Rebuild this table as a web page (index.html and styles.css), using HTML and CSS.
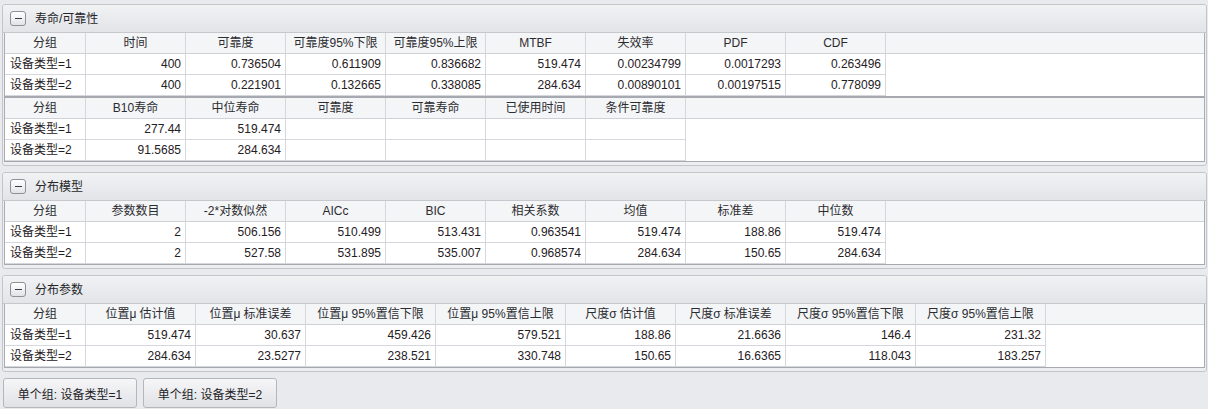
FILE: index.html
```html
<!DOCTYPE html>
<html lang="zh-CN">
<head>
<meta charset="utf-8">
<title>寿命/可靠性</title>
<link rel="stylesheet" href="styles.css">
</head>
<body>
<div class="page">

  <section class="panel">
    <div class="panel-head">
      <span class="toggle"><span class="minus"></span></span>
      <span class="panel-title">寿命/可靠性</span>
    </div>
    <div class="grid cols-a sep">
      <div class="row head">
        <div class="c">分组</div><div class="c">时间</div><div class="c">可靠度</div><div class="c">可靠度95%下限</div><div class="c">可靠度95%上限</div><div class="c">MTBF</div><div class="c">失效率</div><div class="c">PDF</div><div class="c">CDF</div><div class="c fill"></div>
      </div>
      <div class="row">
        <div class="c g">设备类型=1</div><div class="c n">400</div><div class="c n">0.736504</div><div class="c n">0.611909</div><div class="c n">0.836682</div><div class="c n">519.474</div><div class="c n">0.00234799</div><div class="c n">0.0017293</div><div class="c n">0.263496</div><div class="c fill"></div>
      </div>
      <div class="row">
        <div class="c g">设备类型=2</div><div class="c n">400</div><div class="c n">0.221901</div><div class="c n">0.132665</div><div class="c n">0.338085</div><div class="c n">284.634</div><div class="c n">0.00890101</div><div class="c n">0.00197515</div><div class="c n">0.778099</div><div class="c fill"></div>
      </div>
    </div>
    <div class="grid cols-b last">
      <div class="row head">
        <div class="c">分组</div><div class="c">B10寿命</div><div class="c">中位寿命</div><div class="c">可靠度</div><div class="c">可靠寿命</div><div class="c">已使用时间</div><div class="c">条件可靠度</div><div class="c fill"></div>
      </div>
      <div class="row">
        <div class="c g">设备类型=1</div><div class="c n">277.44</div><div class="c n">519.474</div><div class="c n"></div><div class="c n"></div><div class="c n"></div><div class="c n"></div><div class="c fill"></div>
      </div>
      <div class="row">
        <div class="c g">设备类型=2</div><div class="c n">91.5685</div><div class="c n">284.634</div><div class="c n"></div><div class="c n"></div><div class="c n"></div><div class="c n"></div><div class="c fill"></div>
      </div>
    </div>
  </section>

  <section class="panel">
    <div class="panel-head">
      <span class="toggle"><span class="minus"></span></span>
      <span class="panel-title">分布模型</span>
    </div>
    <div class="grid cols-a last">
      <div class="row head">
        <div class="c">分组</div><div class="c">参数数目</div><div class="c">-2*对数似然</div><div class="c">AICc</div><div class="c">BIC</div><div class="c">相关系数</div><div class="c">均值</div><div class="c">标准差</div><div class="c">中位数</div><div class="c fill"></div>
      </div>
      <div class="row">
        <div class="c g">设备类型=1</div><div class="c n">2</div><div class="c n">506.156</div><div class="c n">510.499</div><div class="c n">513.431</div><div class="c n">0.963541</div><div class="c n">519.474</div><div class="c n">188.86</div><div class="c n">519.474</div><div class="c fill"></div>
      </div>
      <div class="row">
        <div class="c g">设备类型=2</div><div class="c n">2</div><div class="c n">527.58</div><div class="c n">531.895</div><div class="c n">535.007</div><div class="c n">0.968574</div><div class="c n">284.634</div><div class="c n">150.65</div><div class="c n">284.634</div><div class="c fill"></div>
      </div>
    </div>
  </section>

  <section class="panel">
    <div class="panel-head">
      <span class="toggle"><span class="minus"></span></span>
      <span class="panel-title">分布参数</span>
    </div>
    <div class="grid cols-c last">
      <div class="row head">
        <div class="c">分组</div><div class="c">位置μ 估计值</div><div class="c">位置μ 标准误差</div><div class="c">位置μ 95%置信下限</div><div class="c">位置μ 95%置信上限</div><div class="c">尺度σ 估计值</div><div class="c">尺度σ 标准误差</div><div class="c">尺度σ 95%置信下限</div><div class="c">尺度σ 95%置信上限</div><div class="c fill"></div>
      </div>
      <div class="row">
        <div class="c g">设备类型=1</div><div class="c n">519.474</div><div class="c n">30.637</div><div class="c n">459.426</div><div class="c n">579.521</div><div class="c n">188.86</div><div class="c n">21.6636</div><div class="c n">146.4</div><div class="c n">231.32</div><div class="c fill"></div>
      </div>
      <div class="row">
        <div class="c g">设备类型=2</div><div class="c n">284.634</div><div class="c n">23.5277</div><div class="c n">238.521</div><div class="c n">330.748</div><div class="c n">150.65</div><div class="c n">16.6365</div><div class="c n">118.043</div><div class="c n">183.257</div><div class="c fill"></div>
      </div>
    </div>
  </section>

  <div class="buttons">
    <button class="btn">单个组: 设备类型=1</button>
    <button class="btn">单个组: 设备类型=2</button>
  </div>
</div>
</body>
</html>
```

FILE: styles.css
```css
* { box-sizing: border-box; }

html, body {
  margin: 0;
  padding: 0;
  background: #e9eaee;
}

body {
  font-family: "Liberation Sans", "Noto Sans CJK SC", sans-serif;
  font-size: 12px;
  color: #1f2024;
  width: 1208px;
  height: 409px;
  overflow: hidden;
}

.page {
  padding: 4px 1px 0 2px;
  display: flex;
  flex-direction: column;
  gap: 6px;
}

.panel {
  border: 1px solid #c3c5cb;
  border-radius: 3px;
  background: #eceef1;
  padding: 0 1px 3px 1px;
  width: 1205px;
}

.panel-head {
  height: 28px;
  margin: 0 -1px;
  padding-left: 7px;
  display: flex;
  align-items: center;
  gap: 9px;
  background: linear-gradient(#f1f2f4, #e3e4e8);
  border-bottom: 1px solid #c6c8ce;
  border-radius: 2px 2px 0 0;
}

.toggle {
  width: 16px;
  height: 15px;
  border: 1px solid #8d9097;
  border-radius: 3px;
  background: linear-gradient(#ffffff, #e2e3e7);
  display: flex;
  align-items: center;
  justify-content: center;
}

.minus {
  width: 7px;
  height: 1px;
  background: #3a3c42;
}

.panel-title {
  color: #25262a;
  line-height: 16px;
}

.grid {
  border-left: 1px solid #a9acb3;
  border-right: 1px solid #a9acb3;
  background: #ffffff;
}

.grid.sep { border-bottom: 2px solid #a6a9b0; }
.grid.last { border-bottom: 1px solid #a6a9b0; }

.row {
  display: grid;
  height: 21px;
}

.cols-a .row { grid-template-columns: 81px repeat(8, 100px) 1fr; }
.cols-b .row { grid-template-columns: 81px repeat(6, 100px) 1fr; }
.cols-c .row { grid-template-columns: 81px 110px 110px 130px 130px 110px 110px 130px 130px 1fr; }

.c {
  border-right: 1px solid #d5d7dc;
  border-bottom: 1px solid #d5d7dc;
  line-height: 20px;
  white-space: nowrap;
  overflow: hidden;
}

.head .c {
  background: #f4f5f7;
  text-align: center;
  color: #2b2c30;
  border-bottom-color: #cfd1d6;
}

.c.g {
  text-align: left;
  padding-left: 5px;
}

.c.n {
  text-align: right;
  padding-right: 4px;
}

.c.fill {
  border-right: none;
  border-bottom: none;
}

.head .c.fill {
  border-bottom: 1px solid #cfd1d6;
}

.buttons {
  display: flex;
  gap: 6px;
  padding-left: 1px;
}

.btn {
  width: 134px;
  height: 30px;
  border: 1px solid #b3b6bd;
  border-radius: 3px;
  background: linear-gradient(#f6f6f8, #e1e2e6);
  font-family: "Liberation Sans", "Noto Sans CJK SC", sans-serif;
  font-size: 12px;
  color: #222326;
  padding: 0;
}
```
